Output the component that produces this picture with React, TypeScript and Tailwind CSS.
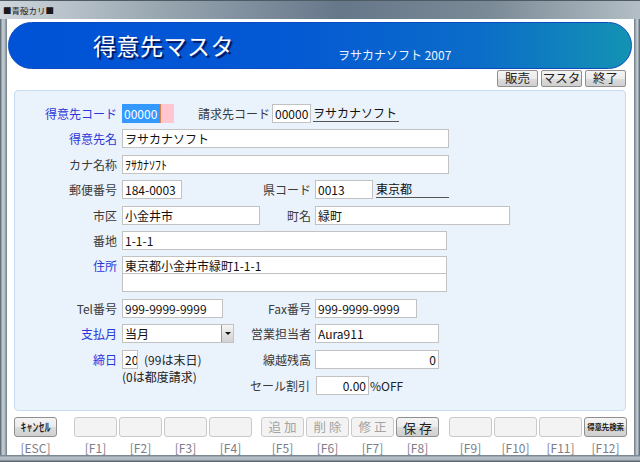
import React from "react";

const Label = ({ children, blue }: { children: React.ReactNode; blue?: boolean }) => (
  <div
    className={`w-[107px] shrink-0 pr-[5px] text-right text-[12px] leading-[19px] ${
      blue ? "text-[#2b36d9]" : "text-[#3a3a3a]"
    }`}
  >
    {children}
  </div>
);

const RLabel = ({ children, className }: { children: React.ReactNode; className: string }) => (
  <div className={`shrink-0 text-right text-[12px] leading-[19px] text-[#3a3a3a] ${className}`}>{children}</div>
);

const Input = ({
  children,
  className,
  right,
}: {
  children?: React.ReactNode;
  className: string;
  right?: boolean;
}) => (
  <div
    className={`h-[19px] shrink-0 border border-[#c2c2c2] bg-white px-[2px] flex items-center text-[12px] leading-[17px] text-[#111] whitespace-nowrap overflow-hidden ${
      right ? "justify-end" : ""
    } ${className}`}
  >
    {children}
  </div>
);

const Under = ({ children, className }: { children: React.ReactNode; className: string }) => (
  <div
    className={`h-[18px] shrink-0 border-b border-[#555] text-[12px] leading-[17px] text-[#111] whitespace-nowrap self-start ${className}`}
  >
    {children}
  </div>
);

const Btn = ({
  children,
  on,
  className = "",
}: {
  children?: React.ReactNode;
  on?: boolean;
  className?: string;
}) => (
  <div
    className={`h-[20px] w-[43px] shrink-0 rounded-[3px] border flex items-center justify-center whitespace-nowrap ${
      on
        ? "border-[#8f8f8f] bg-[linear-gradient(#f4f4f4,#ebebeb_50%,#dcdcdc_51%,#cfcfcf)] text-[#222]"
        : "border-[#cacaca] bg-[#f3f3f3] text-[#a2a2a2]"
    } ${className}`}
  >
    {children}
  </div>
);

const TopBtn = ({ children }: { children: React.ReactNode }) => (
  <div className="h-[17px] w-[41px] rounded-[2px] border border-[#8f8f8f] bg-[linear-gradient(#f4f4f4,#ebebeb_50%,#dcdcdc_51%,#cfcfcf)] flex items-center justify-center text-[12.5px] leading-none text-[#222]">
    {children}
  </div>
);

const KeyLbl = ({ children }: { children: React.ReactNode }) => (
  <div className="w-[43px] shrink-0 text-center text-[12px] leading-[16px] text-[#7c7c8a]">{children}</div>
);

export default function App() {
  return (
    <div className="w-[640px] h-[462px] overflow-hidden flex flex-col bg-[#a9b5be] font-['Noto_Sans_CJK_JP','Noto_Sans',sans-serif]">
      {/* title bar */}
      <div className="h-[19px] shrink-0 flex bg-[#5f707c] border-t border-[#4e5a64]">
        <div className="w-[160px] h-full flex items-center pl-[3px] bg-[linear-gradient(90deg,#cfd6dc,#98a6b0)]">
          <span className="text-[8.5px] leading-none text-[#1a1a1a]">■青殻カリ■</span>
        </div>
        <div className="w-[180px] h-full bg-[linear-gradient(90deg,#98a6b0,#66778a)]" />
        <div className="flex-1 h-full bg-[linear-gradient(90deg,#66778a,#7a8a96_50%,#b3bec5)]" />
      </div>
      <div className="flex flex-1 min-h-0">
        {/* left frame */}
        <div className="w-[7px] shrink-0 bg-[linear-gradient(90deg,#66727c_0px,#66727c_1px,#c3ccd3_2px,#b0bbc3_5px,#7c8892_6px,#7c8892_7px)]" />
        {/* client */}
        <div className="flex-1 bg-white flex flex-col">
          {/* banner */}
          <div className="mt-[3px] ml-[1px] mr-[2px] h-[47px] shrink-0 rounded-full border border-[#0a4cc0] bg-[linear-gradient(90deg,#0052d6_0%,#0459d4_45%,#0b6cc9_75%,#1393b3_100%)] flex items-center">
            <div className="ml-[84px] text-[23px] leading-none text-white [text-shadow:2px_2px_1px_#00145a] tracking-[0.5px]">
              得意先マスタ
            </div>
            <div className="ml-[104px] mt-[18px] text-[12px] leading-none text-[#eef4ff]">ヲサカナソフト 2007</div>
          </div>
          {/* top buttons */}
          <div className="mt-[1px] h-[17px] shrink-0 flex justify-end gap-[3px] pr-[8px]">
            <TopBtn>販売</TopBtn>
            <TopBtn>マスタ</TopBtn>
            <TopBtn>終了</TopBtn>
          </div>
          {/* panel */}
          <div className="mt-[3px] ml-[7px] mr-[8px] h-[321px] shrink-0 rounded-[4px] border border-[#c9dbf0] bg-[#eaf2fc] pt-[13px] flex flex-col gap-[6.4px]">
            {/* row 1 */}
            <div className="flex items-center h-[19px]">
              <Label blue>得意先コード</Label>
              <div className="w-[52px] h-[19px] shrink-0 bg-[#ffc6cf] flex">
                <div className="w-[38px] h-full bg-[#3399ff] text-white flex items-center pl-[2px] text-[12px] leading-none">
                  00000
                </div>
                <div className="w-[1px] h-full bg-[#e0804a]" />
              </div>
              <div className="ml-[24px] text-[12px] leading-[19px] text-[#3a3a3a] whitespace-nowrap">請求先コード</div>
              <Input className="ml-[2px] w-[39px]">00000</Input>
              <Under className="ml-[2px] w-[86px]">ヲサカナソフト</Under>
            </div>
            {/* row 2 */}
            <div className="flex items-center h-[19px]">
              <Label blue>得意先名</Label>
              <Input className="w-[327px]">ヲサカナソフト</Input>
            </div>
            {/* row 3 */}
            <div className="flex items-center h-[19px]">
              <Label>カナ名称</Label>
              <Input className="w-[327px]">ｦｻｶﾅｿﾌﾄ</Input>
            </div>
            {/* row 4 */}
            <div className="flex items-center h-[19px]">
              <Label>郵便番号</Label>
              <Input className="w-[60px]">184-0003</Input>
              <RLabel className="w-[129px]">県コード</RLabel>
              <Input className="ml-[4px] w-[58px]">0013</Input>
              <Under className="ml-[3px] w-[73px]">東京都</Under>
            </div>
            {/* row 5 */}
            <div className="flex items-center h-[19px]">
              <Label>市区</Label>
              <Input className="w-[138px]">小金井市</Input>
              <RLabel className="w-[51px]">町名</RLabel>
              <Input className="ml-[4px] w-[195px]">緑町</Input>
            </div>
            {/* row 6 */}
            <div className="flex items-center h-[19px]">
              <Label>番地</Label>
              <Input className="w-[325px]">1-1-1</Input>
            </div>
            {/* row 7 */}
            <div className="flex items-start h-[36px]">
              <Label blue>住所</Label>
              <div className="w-[325px] h-[36px] shrink-0 border border-[#c2c2c2] bg-white flex flex-col">
                <div className="h-[17px] border-b border-[#c2c2c2] px-[2px] flex items-center text-[12px] leading-[17px] text-[#111]">
                  東京都小金井市緑町1-1-1
                </div>
                <div className="flex-1" />
              </div>
            </div>
            {/* row 8 */}
            <div className="flex items-center h-[19px]">
              <Label>Tel番号</Label>
              <Input className="w-[101px]">999-9999-9999</Input>
              <RLabel className="w-[88px]">Fax番号</RLabel>
              <Input className="ml-[4px] w-[102px]">999-9999-9999</Input>
            </div>
            {/* row 9 */}
            <div className="flex items-center h-[19px]">
              <Label blue>支払月</Label>
              <div className="w-[112px] h-[19px] shrink-0 border border-[#c2c2c2] bg-white flex">
                <div className="flex-1 px-[2px] flex items-center text-[12px] leading-[17px] text-[#111]">当月</div>
                <div className="w-[12px] h-full border-l border-[#9a9a9a] bg-[linear-gradient(#f6f6f6,#e2e2e2_50%,#d2d2d2)] flex items-center justify-center">
                  <div className="w-0 h-0 border-l-[3px] border-r-[3px] border-t-[3px] border-l-transparent border-r-transparent border-t-[#111]" />
                </div>
              </div>
              <RLabel className="w-[77px]">営業担当者</RLabel>
              <Input className="ml-[4px] w-[124px]">Aura911</Input>
            </div>
            {/* rows 10-11 */}
            <div className="flex items-start">
              <Label blue>締日</Label>
              <div className="w-[120px] shrink-0 flex flex-col">
                <div className="h-[19px] flex items-center">
                  <Input className="w-[16px] px-[1px]">20</Input>
                  <div className="ml-[6px] text-[12px] leading-[19px] text-[#222] whitespace-nowrap">(99は末日)</div>
                </div>
                <div className="text-[12px] leading-[16px] text-[#222] whitespace-nowrap">(0は都度請求)</div>
              </div>
              <div className="flex flex-col gap-[7px]">
                <div className="flex items-center h-[19px]">
                  <RLabel className="w-[69px]">線越残高</RLabel>
                  <Input right className="ml-[4px] w-[124px]">
                    0
                  </Input>
                </div>
                <div className="flex items-center h-[19px]">
                  <RLabel className="w-[68px]">セール割引</RLabel>
                  <Input right className="ml-[6px] w-[53px]">
                    0.00
                  </Input>
                  <div className="ml-[1px] text-[12px] leading-[19px] text-[#222]">%OFF</div>
                </div>
              </div>
            </div>
          </div>
          {/* function buttons */}
          <div className="mt-[6px] h-[20px] shrink-0 flex pl-[7px]">
            <Btn on className="text-[12px] font-medium leading-none">ｷｬﾝｾﾙ</Btn>
            <div className="ml-[17px] flex gap-[2px]">
              <Btn />
              <Btn />
              <Btn />
              <Btn />
            </div>
            <div className="ml-[9px] flex gap-[2px]">
              <Btn className="text-[12.5px] leading-none">追 加</Btn>
              <Btn className="text-[12.5px] leading-none">削 除</Btn>
              <Btn className="text-[12.5px] leading-none">修 正</Btn>
              <Btn on className="text-[13px] leading-none">保 存</Btn>
            </div>
            <div className="ml-[10px] flex gap-[2px]">
              <Btn />
              <Btn />
              <Btn />
              <Btn on className="text-[7.5px] font-bold leading-none tracking-[-0.2px]">得意先検索</Btn>
            </div>
          </div>
          <div className="mt-[3px] h-[16px] shrink-0 flex pl-[7px]">
            <KeyLbl>[ESC]</KeyLbl>
            <div className="ml-[17px] flex gap-[2px]">
              <KeyLbl>[F1]</KeyLbl>
              <KeyLbl>[F2]</KeyLbl>
              <KeyLbl>[F3]</KeyLbl>
              <KeyLbl>[F4]</KeyLbl>
            </div>
            <div className="ml-[9px] flex gap-[2px]">
              <KeyLbl>[F5]</KeyLbl>
              <KeyLbl>[F6]</KeyLbl>
              <KeyLbl>[F7]</KeyLbl>
              <KeyLbl>[F8]</KeyLbl>
            </div>
            <div className="ml-[10px] flex gap-[2px]">
              <KeyLbl>[F9]</KeyLbl>
              <KeyLbl>[F10]</KeyLbl>
              <KeyLbl>[F11]</KeyLbl>
              <KeyLbl>[F12]</KeyLbl>
            </div>
          </div>
        </div>
        {/* right frame */}
        <div className="w-[6px] shrink-0 bg-[linear-gradient(90deg,#7c8892_0px,#7c8892_1px,#b0bbc3_2px,#c3ccd3_4px,#66727c_5px,#66727c_6px)]" />
      </div>
      {/* bottom frame */}
      <div className="h-[7px] shrink-0 bg-[linear-gradient(#7c8892_0px,#7c8892_1px,#b8c2ca_2px,#aab5bd_5px,#5e6a74_6px)]" />
    </div>
  );
}
